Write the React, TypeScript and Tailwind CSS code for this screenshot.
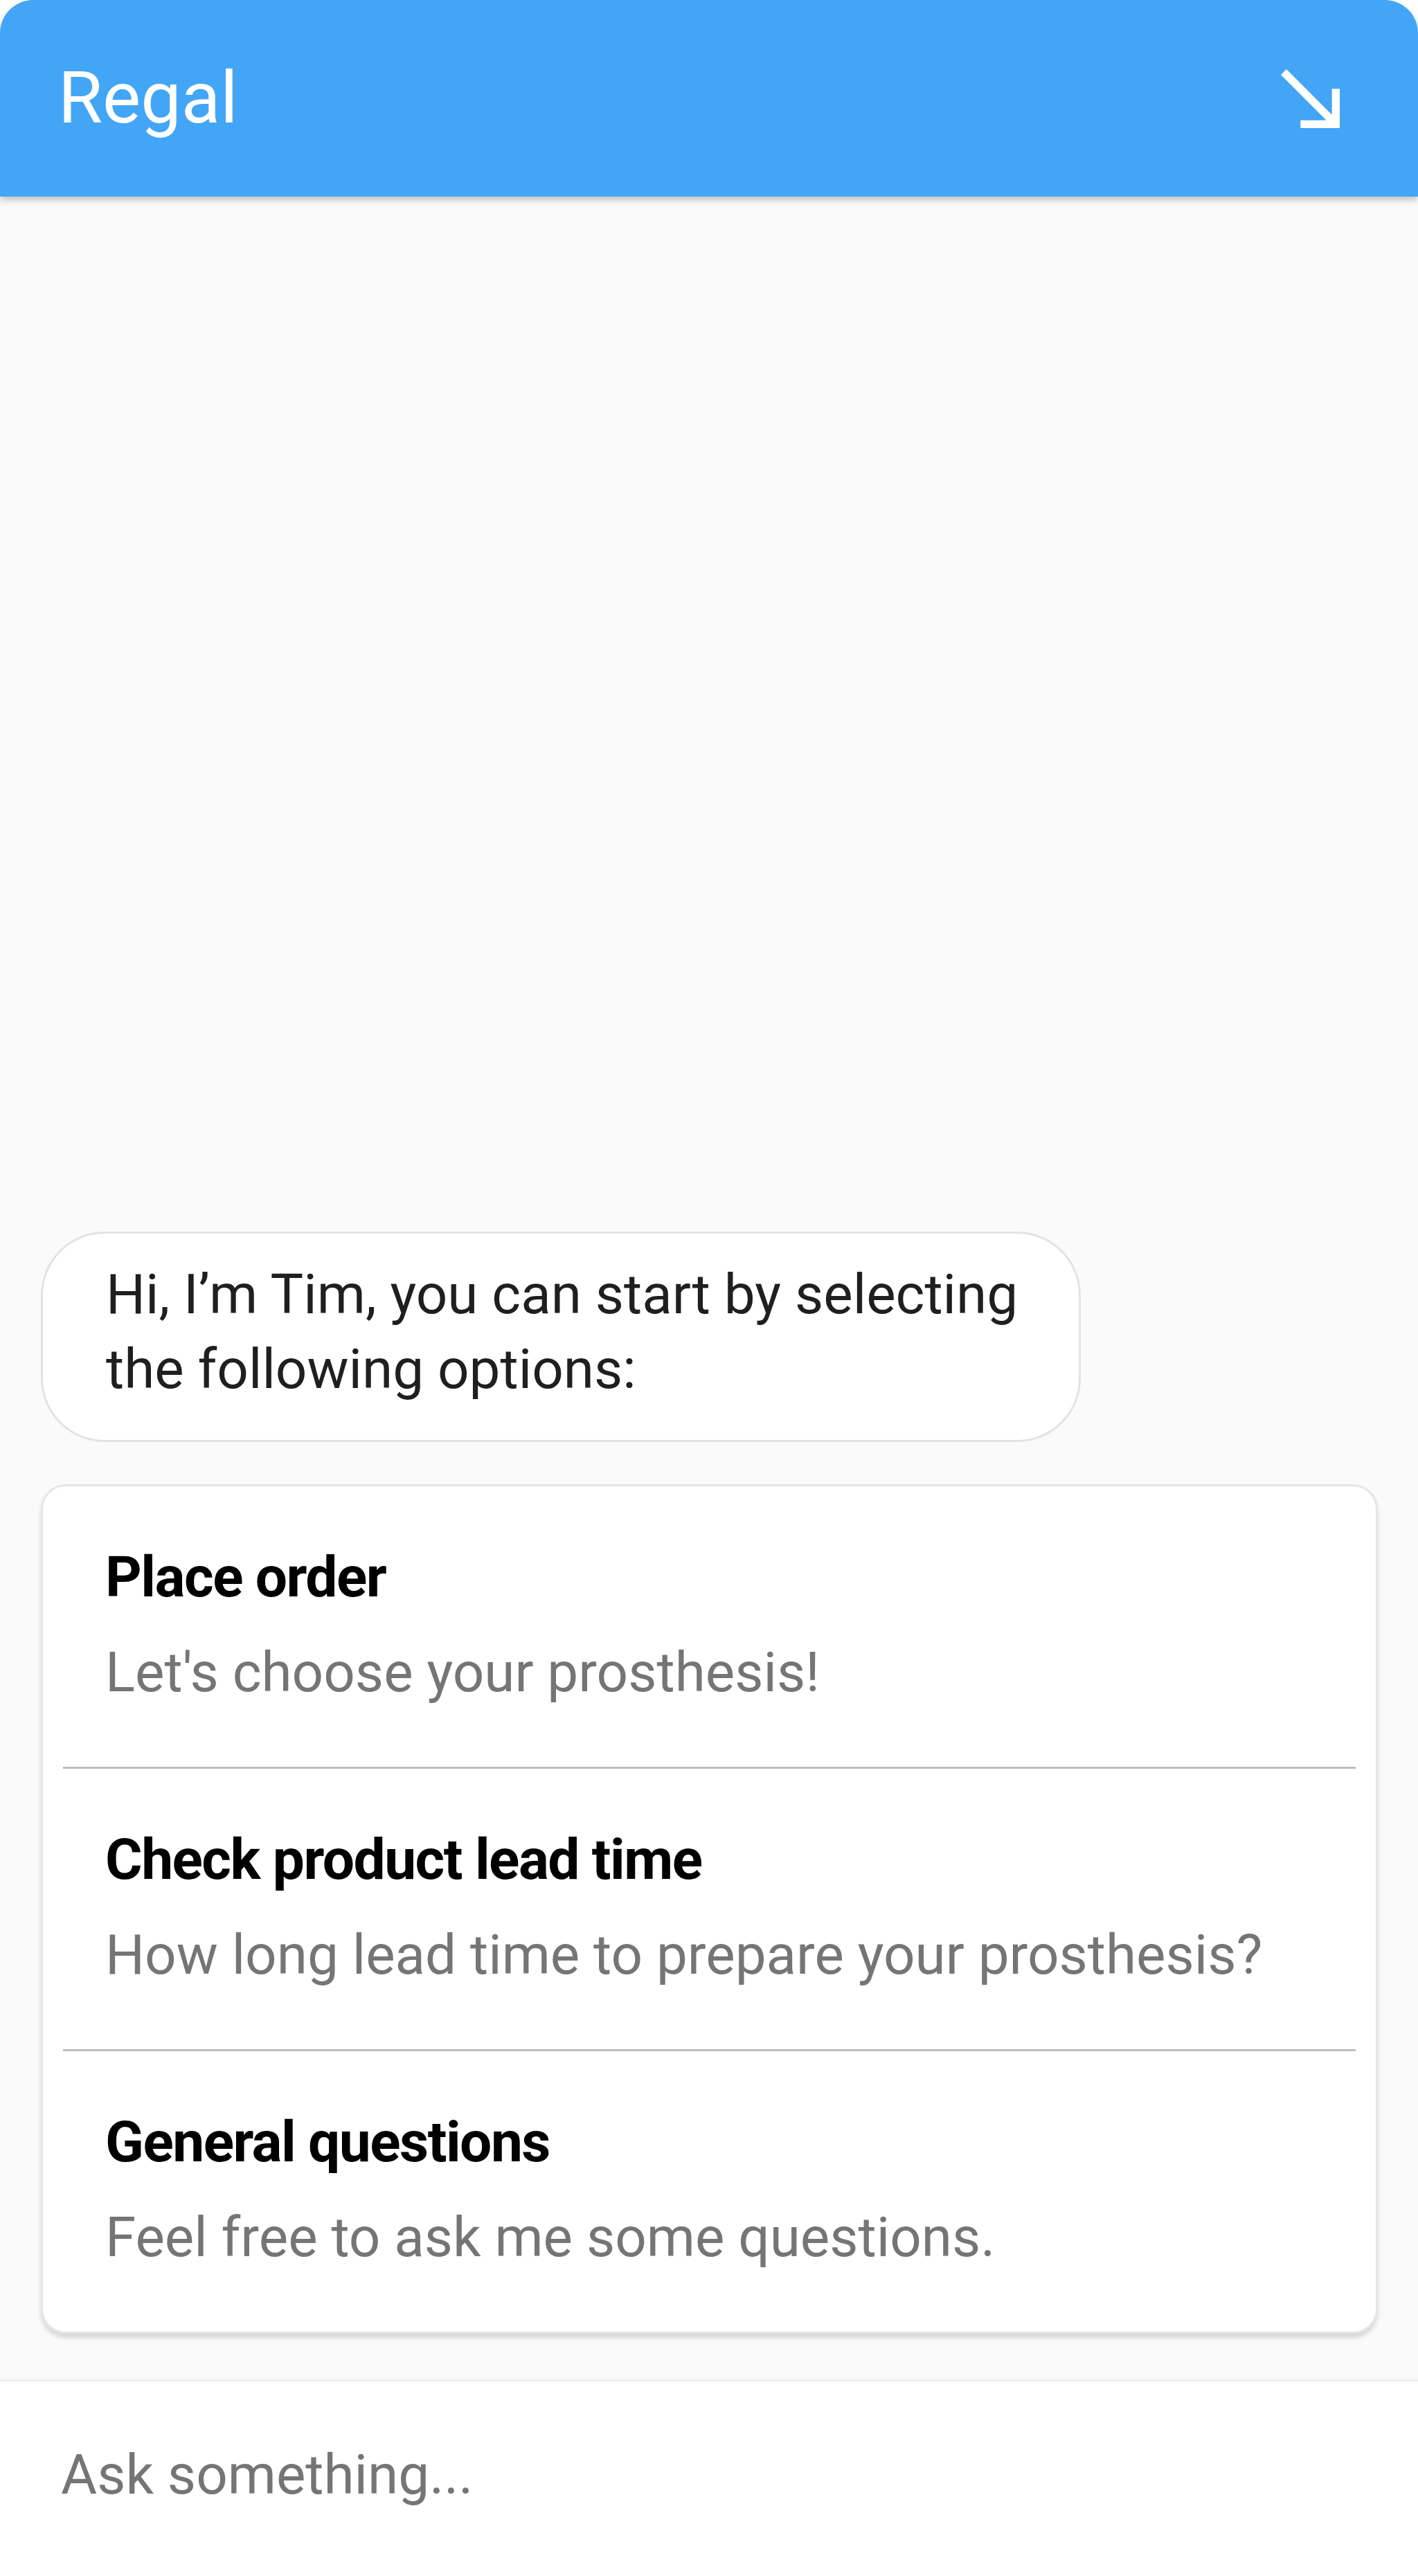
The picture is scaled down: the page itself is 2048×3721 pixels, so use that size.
import React from "react";

const font = { fontFamily: "Roboto, 'Noto Sans', Arial, sans-serif" };

function Option({ title, subtitle }: { title: string; subtitle: string }) {
  return (
    <div className="h-[405px] pl-[90px] pt-[81px]">
      <div className="text-[82px] leading-[100px] font-bold tracking-[-1.5px] text-black">{title}</div>
      <div className="mt-[38px] text-[80px] leading-[100px] text-[#757575]">{subtitle}</div>
    </div>
  );
}

export default function App() {
  return (
    <div className="w-[2048px] h-[3721px] bg-white flex flex-col overflow-hidden" style={font}>
      <header className="relative z-10 h-[284px] shrink-0 bg-[#42a5f5] rounded-t-[48px] flex items-center justify-between pl-[84px] pr-[113px] shadow-[0_5px_10px_rgba(0,0,0,0.22)]">
        <span className="text-[104px] leading-[120px] text-white">Regal</span>
        <svg width="85" height="85" viewBox="4 4 15 15" fill="white">
          <path d="M19 9h-2v6.59L5.41 4 4 5.41 15.59 17H9v2h10V9z" />
        </svg>
      </header>

      <main className="flex-1 bg-[#fafafa] flex flex-col justify-end px-[59px] pb-[66px]">
        <div className="w-[1502px] bg-white border-[3px] border-[#e3e3e3] rounded-[92px] pl-[91px] pr-[60px] pt-[34px] pb-[48px]">
          <p className="text-[80px] leading-[108px] text-[#1f1f1f]">
            Hi, I’m Tim, you can start by selecting
            <br />
            the following options:
          </p>
        </div>

        <div className="mt-[61px] w-[1931px] bg-white border-[3px] border-[#e6e6e6] rounded-[36px] shadow-[0_6px_6px_rgba(0,0,0,0.14)]">
          <Option title="Place order" subtitle="Let's choose your prosthesis!" />
          <div className="mx-[29px] h-[3px] bg-[#bdbdbd]" />
          <Option title="Check product lead time" subtitle="How long lead time to prepare your prosthesis?" />
          <div className="mx-[29px] h-[3px] bg-[#bdbdbd]" />
          <Option title="General questions" subtitle="Feel free to ask me some questions." />
        </div>
      </main>

      <footer className="h-[284px] shrink-0 bg-white border-t-[3px] border-[#eeeeee] pl-[88px] pt-[85px]">
        <div className="text-[80px] leading-[100px] text-[#757575]">Ask something...</div>
      </footer>
    </div>
  );
}
